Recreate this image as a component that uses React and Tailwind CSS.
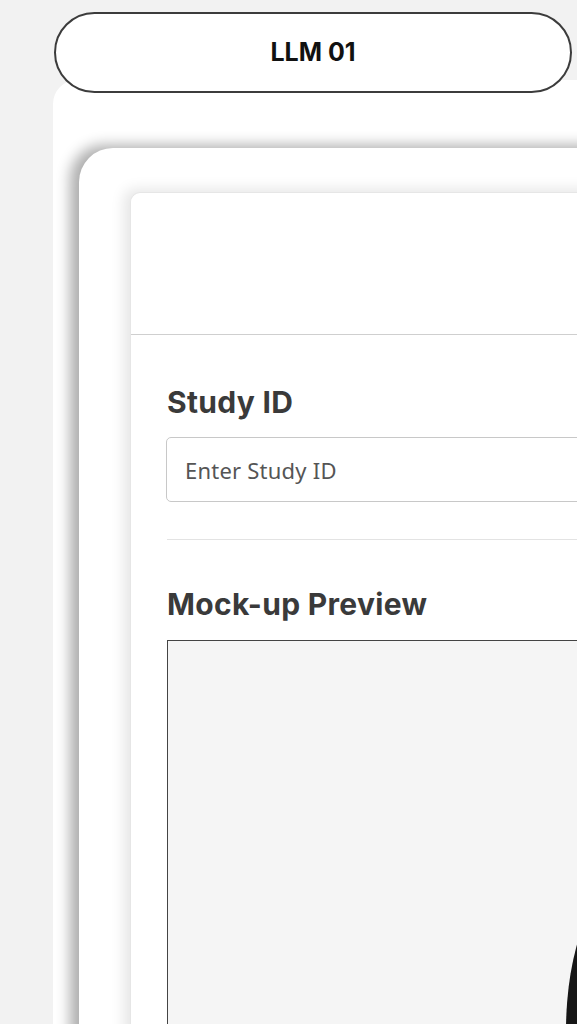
export default function App() {
  return (
    <div className="h-[1024px] w-[577px] overflow-hidden bg-[#f2f2f2] font-['Inter',sans-serif]">
      <div className="w-[700px] pl-[53px] pt-[12px]">
        {/* Title pill */}
        <div className="relative z-10 ml-px flex h-[81px] w-[518px] items-center justify-center rounded-full border-2 border-[#3c3c3c] bg-white">
          <span className="text-[25px] font-bold text-[#111]">LLM 01</span>
        </div>

        {/* Outer panel */}
        <div className="-mt-[13px] h-[1000px] rounded-tl-[24px] bg-white pl-[26px] pt-[68px]">
          {/* Raised card */}
          <div className="h-[900px] rounded-tl-[34px] bg-white pl-[51px] pt-[44px] shadow-[-9px_-3px_14px_rgba(0,0,0,0.32)]">
            {/* Form card */}
            <div className="h-[850px] rounded-tl-[10px] border-l border-t border-[#e6e6e6] bg-white shadow-[-6px_-3px_14px_rgba(0,0,0,0.1)]">
              <div className="h-[142px] border-b border-[#cfcfcf]" />

              <div className="pl-[35px] pt-[48px]">
                <h2 className="ml-px text-[30px] font-bold leading-[38px] tracking-[0.01em] text-[#3a3a3a]">Study ID</h2>
                <input
                  type="text"
                  placeholder="Enter Study ID"
                  className="mt-[16px] h-[65px] w-[500px] rounded-[5px] border border-[#c8c8c8] bg-white px-[18px] font-['Noto_Sans',sans-serif] text-[22px] tracking-[0.01em] text-[#555] placeholder:text-[#555] focus:outline-none"
                />

                <div className="mt-[37px] ml-px h-px w-[500px] bg-[#e3e3e3]" />

                <h2 className="mt-[45px] ml-px text-[30px] font-bold leading-[38px] tracking-[0.01em] text-[#3a3a3a]">Mock-up Preview</h2>

                {/* Preview frame */}
                <div className="relative mt-[17px] ml-px h-[500px] w-[500px] overflow-hidden border border-[#444] bg-[#f5f5f5]">
                  <div className="absolute left-[398px] top-[240px] h-[300px] w-[120px] rounded-[50%] bg-[#161616]" />
                </div>
              </div>
            </div>
          </div>
        </div>
      </div>
    </div>
  );
}
